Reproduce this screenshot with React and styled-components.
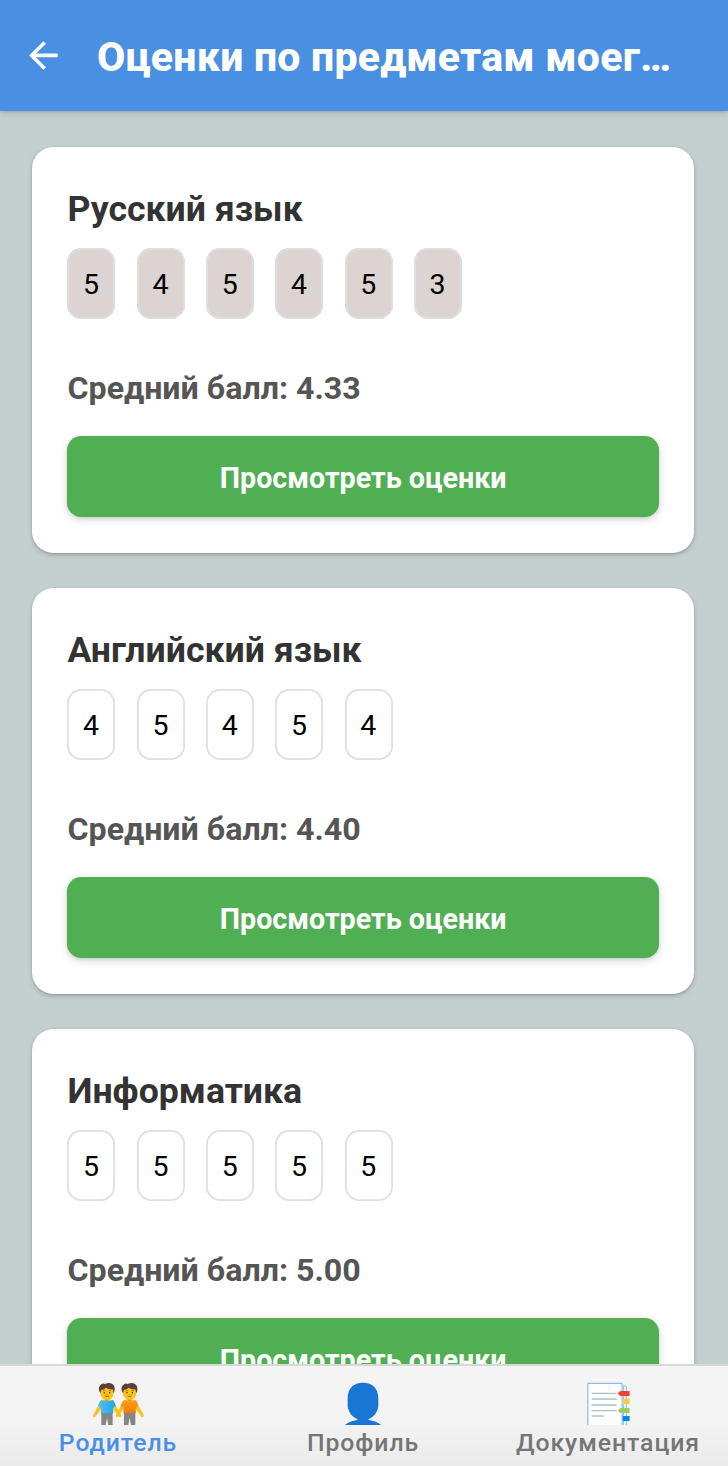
import React from 'react';
import styled, { createGlobalStyle } from 'styled-components';

const GlobalStyle = createGlobalStyle`
  * { box-sizing: border-box; }
  html, body { margin: 0; padding: 0; }
  body { font-family: Roboto, "Noto Sans", sans-serif; overflow: hidden; }
`;

const Screen = styled.div`
  display: flex;
  flex-direction: column;
  width: 728px;
  height: 1466px;
  background: #c4d0cf;
`;

const Header = styled.header`
  flex: none;
  z-index: 1;
  display: flex;
  align-items: center;
  height: 111.3px;
  padding-left: 21.5px;
  background: #4a90e2;
  box-shadow: 0 2px 6px rgba(0, 0, 0, 0.14), 0 1px 2px rgba(0, 0, 0, 0.08);
`;

const BackButton = styled.button`
  display: flex;
  padding: 0;
  border: 0;
  background: none;
  margin: 0 32.7px 1px 0;
`;

const HeaderTitle = styled.h1`
  width: 590px;
  margin: 3px 0 0;
  color: #fff;
  font-size: 41px;
  font-weight: 800;
  letter-spacing: 0.24px;
  line-height: 50px;
  white-space: nowrap;
`;

const Content = styled.main`
  flex: 1;
  min-height: 0;
  overflow: hidden;
  display: flex;
  flex-direction: column;
  gap: 35.5px;
  padding: 36px 33.6px 0 31.9px;
`;

const Card = styled.section`
  flex: none;
  height: 405.5px;
  padding: 35.6px;
  border-radius: 21.4px;
  background: #fff;
  box-shadow: 0 2px 5px rgba(0, 0, 0, 0.2), 0 1px 2px rgba(0, 0, 0, 0.1);
`;

const Subject = styled.h2`
  margin: 0;
  padding-top: 1px;
  height: 65.5px;
  color: #333;
  font-size: 35.65px;
  font-weight: 700;
  line-height: 51px;
`;

const Grades = styled.div`
  display: flex;
  gap: 21.4px;
`;

const Grade = styled.span`
  display: flex;
  align-items: center;
  justify-content: center;
  width: 47.9px;
  height: 70.6px;
  padding: 2.4px 0.6px 0 0;
  border-radius: 14.3px;
  box-shadow: inset 0 0 0 1.8px #dfdfdf;
  background: ${(p) => (p.$filled ? '#dcd4d2' : '#fff')};
  color: #000;
  font-size: 28.5px;
`;

const Average = styled.p`
  margin: 50.3px 0 28.5px;
  color: #555;
  font-size: 32.2px;
  font-weight: 700;
  line-height: 38px;
`;

const ViewButton = styled.button`
  display: block;
  width: 100%;
  height: 81.3px;
  padding: 3.6px 0 0;
  border: 0;
  border-radius: 14.3px;
  background: #4faf52;
  color: #fff;
  font-family: inherit;
  font-size: 28.7px;
  font-weight: 700;
  box-shadow: 0 3px 8px rgba(0, 0, 0, 0.15), 0 1px 3px rgba(0, 0, 0, 0.1);
`;

const TabBar = styled.nav`
  flex: none;
  z-index: 1;
  display: flex;
  justify-content: space-between;
  height: 102px;
  padding-right: 2px;
  border-top: 2px solid #d8d8d8;
  background: linear-gradient(#f4f4f4 0%, #f3f3f3 55%, #ebebeb 100%);
`;

const Tab = styled.a`
  display: flex;
  flex-direction: column;
  align-items: center;
  width: 236px;
  padding-top: 16px;
  color: ${(p) => (p.$active ? '#4a90e2' : '#757575')};
  font-size: 24.8px;
  font-weight: 500;
  letter-spacing: 0.93px;
  line-height: 28px;
`;

const TabIcon = styled.svg`
  flex: none;
  width: 53.3px;
  height: 43px;
  margin-bottom: 4px;
`;

function Person({ x, shirt }) {
  return (
    <g transform={`translate(${x} 0)`}>
      <path d="M-17 136Q0 130 17 136Q23 139 25 150L42 178Q43 187 37 187L15 158L14 175H-15L-15 158L-36 186Q-42 188-42 181L-25 150Q-23 139-17 136Z" fill="#fbc21d" />
      <path d="M-17 135Q0 142 17 135Q23 139 26 153L18 158L19 175H-19L-18 158L-27 153Q-23 139-17 135Z" fill={shirt} />
      <path d="M-17 174H17V210H4L0 188L-4 210H-17Z" fill="#858585" />
      <path d="M-6 128H6V136Q0 142-6 136Z" fill="#e59600" />
      <ellipse cy="114" rx="20" ry="21" fill="#fcc21b" />
      <path d="M-20 115Q-29 99-20 91Q-14 83-6 87Q7 80 17 88Q28 95 20 115L17 103Q5 104-3 98Q-11 106-17 104Z" fill="#5d4037" />
      <path d="M-12 108Q-8 105-5 108M5 108Q8 105 12 108" fill="none" stroke="#6d4c41" strokeWidth="2" />
      <circle cx="-8" cy="113" r="2.3" fill="#404040" />
      <circle cx="8" cy="113" r="2.3" fill="#404040" />
      <path d="M-2 118H2" stroke="#dd9800" strokeWidth="2" />
      <path d="M-6 123Q0 126 6 123" fill="none" stroke="#795548" strokeWidth="2.4" />
    </g>
  );
}

function ParentIcon() {
  return (
    <TabIcon viewBox="34 81 160 129">
      <defs>
        <linearGradient id="blueShirt"><stop stopColor="#5bbcf7" /><stop offset="1" stopColor="#15a8f5" /></linearGradient>
        <linearGradient id="orangeShirt" x2="0" y2="1"><stop stopColor="#ff9f22" /><stop offset="1" stopColor="#f57c00" /></linearGradient>
      </defs>
      <Person x={82} shirt="url(#blueShirt)" />
      <Person x={150} shirt="url(#orangeShirt)" />
    </TabIcon>
  );
}

function ProfileIcon() {
  return (
    <TabIcon viewBox="34 81 160 129">
      <path d="M115 83C143 83 161 100 161 129V155C157 174 146 187 132 192V195C148 198 163 202 171 212H59C67 202 83 198 98 195V192C84 187 73 174 69 155V129C69 100 87 83 115 83Z" fill="#1976d2" />
    </TabIcon>
  );
}

function DocsIcon() {
  return (
    <TabIcon viewBox="34 81 160 129">
      <path d="M150 93H170V212H150Z" fill="#fff" stroke="#82bee8" strokeWidth="3" />
      <path d="M162 94V212" stroke="#82bee8" strokeWidth="3" />
      <rect x="54.5" y="85" width="103" height="140" rx="2" fill="#fff" stroke="#82bfee" strokeWidth="3.5" />
      <path d="M66 115H141M66 132H141M66 150H141M66 167H141M66 183H102" stroke="#b0bec5" strokeWidth="4" />
      <path d="M152 108H180V123H152L144 115Z" fill="#f44336" />
      <path d="M159 131H180V147H159Z" fill="#ffca4b" />
      <path d="M152 159H180V174H152L144 167Z" fill="#9ccc65" />
      <path d="M159 183H180V198H159Z" fill="#0288e5" />
    </TabIcon>
  );
}

const subjects = [
  { name: 'Русский язык', grades: [5, 4, 5, 4, 5, 3], average: '4.33', filled: true },
  { name: 'Английский язык', grades: [4, 5, 4, 5, 4], average: '4.40' },
  { name: 'Информатика', grades: [5, 5, 5, 5, 5], average: '5.00' },
];

export default function App() {
  return (
    <Screen>
      <GlobalStyle />
      <Header>
        <BackButton aria-label="Назад">
          <svg width="42.8" height="42.8" viewBox="0 0 24 24" fill="#fff">
            <path d="M20 11H7.83l5.59-5.59L12 4l-8 8 8 8 1.41-1.41L7.83 13H20v-2z" />
          </svg>
        </BackButton>
        <HeaderTitle>Оценки по предметам моег…</HeaderTitle>
      </Header>
      <Content>
        {subjects.map((s) => (
          <Card key={s.name}>
            <Subject>{s.name}</Subject>
            <Grades>
              {s.grades.map((g, i) => (
                <Grade key={i} $filled={s.filled}>{g}</Grade>
              ))}
            </Grades>
            <Average>Средний балл: {s.average}</Average>
            <ViewButton>Просмотреть оценки</ViewButton>
          </Card>
        ))}
      </Content>
      <TabBar>
        <Tab $active><ParentIcon />Родитель</Tab>
        <Tab><ProfileIcon />Профиль</Tab>
        <Tab><DocsIcon />Документация</Tab>
      </TabBar>
    </Screen>
  );
}
